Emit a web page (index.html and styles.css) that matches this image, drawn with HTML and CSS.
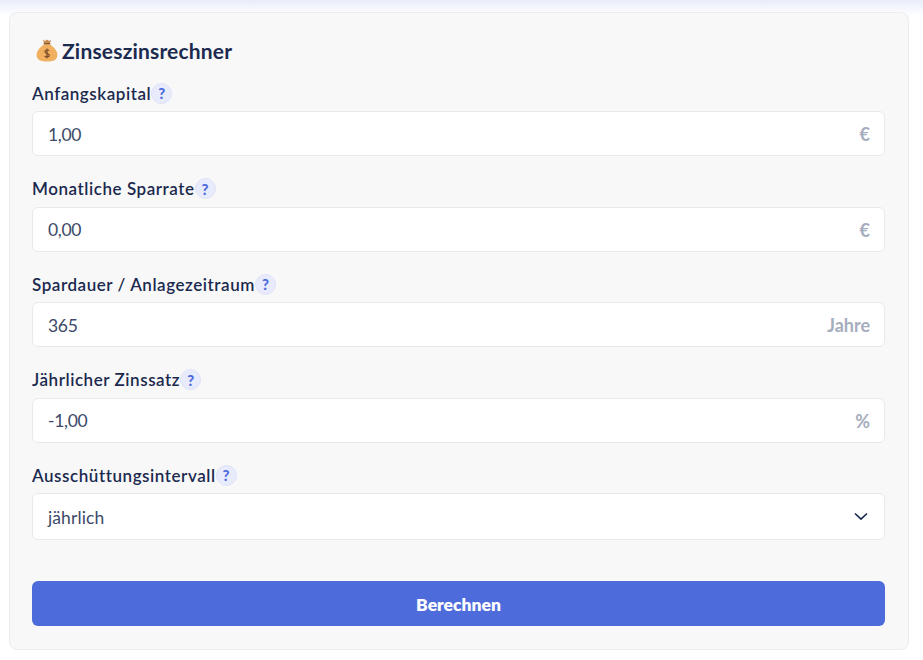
FILE: index.html
```html
<!DOCTYPE html>
<html lang="de">
<head>
<meta charset="utf-8">
<title>Zinseszinsrechner</title>
<link rel="stylesheet" href="styles.css">
</head>
<body>
<main class="card">
  <h1 class="title">
    <svg class="bag" viewBox="0 0 22 24" aria-hidden="true">
      <path d="M7 1.5 L9 3 L11 1.5 L13 3 L15 1.5 L14 5.5 H8 Z" fill="#c98a4e"/>
      <rect x="7.6" y="5" width="6.8" height="1.7" rx=".8" fill="#8a5a35"/>
      <path d="M8 6.5 C4 9 .6 13 .6 17 C.6 21.5 4 23.5 11 23.5 C18 23.5 21.4 21.5 21.4 17 C21.4 13 18 9 14 6.5 Z" fill="#f0b060"/>
      <path d="M13.2 12.6 C12.6 11.8 9 11.6 8.9 13.6 C8.8 15.8 13.4 15.2 13.3 17.4 C13.2 19.4 9.4 19.2 8.7 18.2 M11 10.6 V20.2" fill="none" stroke="#7d4a2a" stroke-width="1.2"/>
    </svg>
    Zinseszinsrechner
  </h1>
  <form class="form">
    <div class="field">
      <div class="label"><span>Anfangskapital</span><span class="help">?</span></div>
      <div class="input"><span class="value">1,00</span><span class="value unit">€</span></div>
    </div>
    <div class="field">
      <div class="label"><span>Monatliche Sparrate</span><span class="help">?</span></div>
      <div class="input"><span class="value">0,00</span><span class="value unit">€</span></div>
    </div>
    <div class="field">
      <div class="label"><span>Spardauer / Anlagezeitraum</span><span class="help">?</span></div>
      <div class="input"><span class="value">365</span><span class="value unit">Jahre</span></div>
    </div>
    <div class="field">
      <div class="label"><span>Jährlicher Zinssatz</span><span class="help">?</span></div>
      <div class="input"><span class="value">-1,00</span><span class="value unit">%</span></div>
    </div>
    <div class="field">
      <div class="label"><span>Ausschüttungsintervall</span><span class="help">?</span></div>
      <div class="input select"><span class="value">jährlich</span>
        <svg class="chevron" viewBox="0 0 14 9" aria-hidden="true"><path d="M1 1.5 L7 7.2 L13 1.5" fill="none" stroke="#1b2a4e" stroke-width="1.7"/></svg>
      </div>
    </div>
    <button class="submit" type="button">Berechnen</button>
  </form>
</main>
</body>
</html>
```
FILE: styles.css
```css
* { box-sizing: border-box; }
html, body { margin: 0; height: 100%; }
body {
  background: linear-gradient(#e9edfa 0, #ffffff 16px) no-repeat;
  padding: 12px 14px 10px 9px;
  font-family: "Lato", "Liberation Sans", sans-serif;
  color: #1b2a4e;
}
.card {
  height: 638px;
  background: #f8f8f9;
  border: 1px solid #ececef;
  border-radius: 8px;
  padding: 22px 23px 23px 22px;
}
.title {
  display: flex;
  align-items: center;
  gap: 4px;
  margin: 0 0 17px 4px;
  height: 30px;
  font-size: 21px;
  font-weight: 700;
  letter-spacing: .18px;
}
.bag { width: 22px; height: 24px; }
.form { display: flex; flex-direction: column; }
.field { margin-bottom: 21.5px; }
.label {
  display: flex;
  align-items: center;
  height: 22px;
  margin-bottom: 7px;
  font-size: 17px;
  font-weight: 600;
  letter-spacing: .55px;
}
.help {
  width: 21px;
  height: 21px;
  border-radius: 50%;
  background: #e8ebfb;
  border: 1px solid #dfe3f5;
  color: #4f6bdc;
  font-size: 15px;
  font-weight: 900;
  letter-spacing: 0;
  display: flex;
  align-items: center;
  justify-content: center;
}
.input {
  height: 45px;
  background: #fff;
  border: 1px solid #e8e9ed;
  border-radius: 6px;
  padding: 0 14px 0 15px;
  display: flex;
  align-items: center;
  justify-content: space-between;
  font-size: 17.5px;
  color: #3c4a68;
}
.value { padding-top: 1px; letter-spacing: -.3px; }
.unit { color: #a6adbd; font-weight: 700; font-size: 18px; letter-spacing: 0; }
.select { height: 46.5px; padding-right: 16px; }
.select .value { padding-top: 2px; letter-spacing: .1px; }
.chevron { width: 14px; height: 9px; }
.submit {
  margin-top: 20px;
  padding-top: 2px;
  height: 45px;
  border: 0;
  border-radius: 6px;
  background: #4d6bdb;
  color: #fff;
  font: 800 17.5px "Lato", "Liberation Sans", sans-serif;
}
```
